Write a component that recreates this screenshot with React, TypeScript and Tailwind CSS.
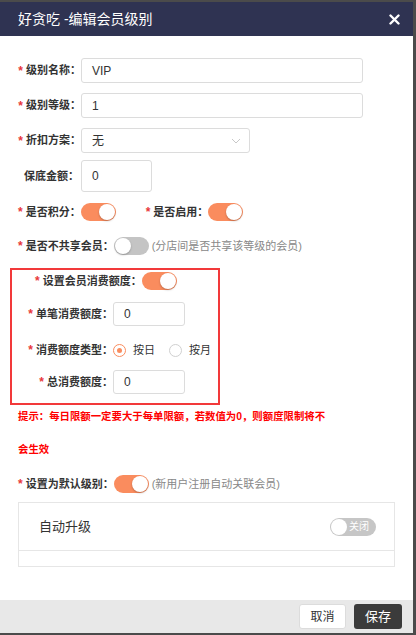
import React from 'react';

const font = { fontFamily: '"Liberation Sans", "Noto Sans CJK SC", sans-serif' };

const labelCls = 'flex items-center whitespace-nowrap shrink-0 text-[11px] font-bold text-[#333]';

function Star() {
    return <span className="text-[#e8373a] mr-[3px] text-[12px] font-bold">*</span>;
}

function Toggle({ on }: { on: boolean }) {
    return (
        <div
            className={`relative w-[35px] h-[18px] rounded-full shrink-0 ${on ? 'bg-[#fa8c5e]' : 'bg-[#c4c4c4]'}`}
        >
            <div
                className={`absolute top-[1px] w-[16px] h-[16px] rounded-full bg-white shadow-[0_1px_2px_rgba(0,0,0,0.25)] ${on ? 'right-[1px]' : 'left-[1px]'}`}
            />
        </div>
    );
}

function Radio({ checked, label }: { checked: boolean; label: string }) {
    return (
        <div className="flex items-center">
            <div
                className={`w-[13px] h-[13px] rounded-full border flex items-center justify-center ${checked ? 'border-[#fa8c5e]' : 'border-[#d0d0d0]'}`}
            >
                {checked && <div className="w-[5px] h-[5px] rounded-full bg-[#fa8c5e]" />}
            </div>
            <span className="ml-[7px] text-[11px] text-[#333]">{label}</span>
        </div>
    );
}

function Input({ value, className }: { value: string; className: string }) {
    return (
        <div className={`border border-[#dcdcdc] rounded-[3px] flex items-center pl-[10px] text-[12px] text-[#333] shrink-0 ${className}`}>
            {value}
        </div>
    );
}

export default function App() {
    return (
        <div className="w-[416px] h-[635px] bg-[#4b4b4b] pt-[2px] pr-[3px] pb-[2px]" style={font}>
            <div className="h-full bg-white flex flex-col">
                {/* Header */}
                <div className="h-[34px] bg-[#2f3352] flex items-center justify-between pl-[18px] pr-[13px] shrink-0">
                    <span className="text-white text-[14px]">好贪吃 -编辑会员级别</span>
                    <svg width="11" height="11" viewBox="0 0 11 11">
                        <path d="M1.5 1.5 L9.5 9.5 M9.5 1.5 L1.5 9.5" stroke="#fff" strokeWidth="2.4" strokeLinecap="round" />
                    </svg>
                </div>

                {/* Body */}
                <div className="flex-1 pt-[22px] overflow-hidden">
                    <div className="flex items-center pl-[18px]">
                        <div className={`w-[63px] justify-end ${labelCls}`}>
                            <Star />级别名称：
                        </div>
                        <Input value="VIP" className="w-[282px] h-[25px]" />
                    </div>
                    <div className="flex items-center pl-[18px] mt-[10px]">
                        <div className={`w-[63px] justify-end ${labelCls}`}>
                            <Star />级别等级：
                        </div>
                        <Input value="1" className="w-[282px] h-[25px]" />
                    </div>
                    <div className="flex items-center pl-[18px] mt-[10px]">
                        <div className={`w-[63px] justify-end ${labelCls}`}>
                            <Star />折扣方案：
                        </div>
                        <div className="w-[169px] h-[25px] border border-[#dcdcdc] rounded-[3px] flex items-center justify-between pl-[10px] pr-[8px] text-[12px] text-[#333]">
                            无
                            <svg width="10" height="6" viewBox="0 0 10 6">
                                <polyline points="1,1 5,5 9,1" fill="none" stroke="#c8c8c8" strokeWidth="1" />
                            </svg>
                        </div>
                    </div>
                    <div className="flex items-center pl-[18px] mt-[7px]">
                        <div className={`w-[63px] justify-end pr-[2px] ${labelCls}`}>
                            保底金额：
                        </div>
                        <Input value="0" className="w-[71px] h-[32px]" />
                    </div>
                    <div className="flex items-center pl-[18px] mt-[11px] h-[18px]">
                        <div className={labelCls}>
                            <Star />是否积分：
                        </div>
                        <Toggle on />
                        <div className={`ml-[30px] ${labelCls}`}>
                            <Star />是否启用：
                        </div>
                        <Toggle on />
                    </div>
                    <div className="flex items-center pl-[18px] mt-[16px] h-[18px]">
                        <div className={labelCls}>
                            <Star />是否不共享会员：
                        </div>
                        <Toggle on={false} />
                        <span className="ml-[3px] text-[11px] text-[#888] whitespace-nowrap">(分店间是否共享该等级的会员)</span>
                    </div>

                    {/* Highlighted box */}
                    <div className="ml-[10px] mt-[13px] w-[210px] h-[137px] border-2 border-[#f2393a] pt-[2px]">
                        <div className="flex items-center pl-[23px] h-[18px]">
                            <div className={labelCls}>
                                <Star />设置会员消费额度：
                            </div>
                            <Toggle on />
                        </div>
                        <div className="flex items-center mt-[12px]">
                            <div className={`w-[101px] justify-end ${labelCls}`}>
                                <Star />单笔消费额度：
                            </div>
                            <Input value="0" className="w-[72px] h-[24px]" />
                        </div>
                        <div className="flex items-center mt-[17px] h-[14px]">
                            <div className={`w-[101px] justify-end ${labelCls}`}>
                                <Star />消费额度类型：
                            </div>
                            <Radio checked label="按日" />
                            <div className="ml-[14px]">
                                <Radio checked={false} label="按月" />
                            </div>
                        </div>
                        <div className="flex items-center mt-[13px]">
                            <div className={`w-[101px] justify-end ${labelCls}`}>
                                <Star />总消费额度：
                            </div>
                            <Input value="0" className="w-[72px] h-[24px]" />
                        </div>
                    </div>

                    {/* Hint */}
                    <div className="pl-[18px] text-[10.4px] font-bold text-[#ff0000] leading-[33px] mt-[-5px]">
                        <div>提示：每日限额一定要大于每单限额，若数值为0，则额度限制将不</div>
                        <div>会生效</div>
                    </div>

                    <div className="flex items-center pl-[18px] mt-[9px] h-[18px]">
                        <div className={labelCls}>
                            <Star />设置为默认级别：
                        </div>
                        <Toggle on />
                        <span className="ml-[3px] text-[11px] text-[#888] whitespace-nowrap">(新用户注册自动关联会员)</span>
                    </div>

                    {/* Auto upgrade card */}
                    <div className="ml-[18px] mt-[9px] w-[377px] border border-[#e6e6e6]">
                        <div className="h-[48px] flex items-center justify-between pl-[20px] pr-[18px] border-b border-[#e6e6e6]">
                            <span className="text-[13px] text-[#333]">自动升级</span>
                            <div className="relative w-[46px] h-[18px] rounded-full bg-[#c6c6c6] flex items-center justify-end pr-[7px]">
                                <div className="absolute left-[1px] top-[1px] w-[16px] h-[16px] rounded-full bg-white" />
                                <span className="text-[10px] text-white leading-none">关闭</span>
                            </div>
                        </div>
                        <div className="h-[15px]" />
                    </div>
                </div>

                {/* Footer */}
                <div className="h-[33px] bg-[#e8e8e8] flex items-center justify-end gap-[8px] pr-[11px] shrink-0">
                    <div className="w-[47px] h-[25px] bg-white border border-[#dcdcdc] rounded-[3px] flex items-center justify-center text-[12px] text-[#333]">
                        取消
                    </div>
                    <div className="w-[48px] h-[25px] bg-[#3b3b3b] rounded-[3px] flex items-center justify-center text-[13px] text-white">
                        保存
                    </div>
                </div>
            </div>
        </div>
    );
}
